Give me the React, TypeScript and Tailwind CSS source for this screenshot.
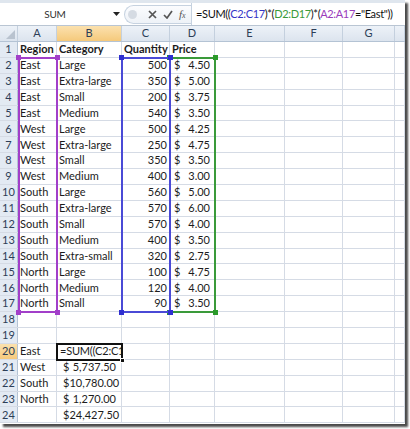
import React from "react";

// column widths of the sheet (row header first, then A..G, then the partial H)
const COLS = [
  { key: "A", w: "w-[39px]" },
  { key: "B", w: "w-[65px]" },
  { key: "C", w: "w-[48px]" },
  { key: "D", w: "w-[45px]" },
  { key: "E", w: "w-[70px]" },
  { key: "F", w: "w-[58px]" },
  { key: "G", w: "w-[52px]" },
  { key: "", w: "w-[10px]" },
];

type Row = { a?: string; b?: string; c?: string; d?: string; bold?: boolean; money?: string };

const ROWS: Row[] = [
  { a: "Region", b: "Category", c: "Quantity", d: "Price", bold: true },
  { a: "East", b: "Large", c: "500", d: "4.50" },
  { a: "East", b: "Extra-large", c: "350", d: "5.00" },
  { a: "East", b: "Small", c: "200", d: "3.75" },
  { a: "East", b: "Medium", c: "540", d: "3.50" },
  { a: "West", b: "Large", c: "500", d: "4.25" },
  { a: "West", b: "Extra-large", c: "250", d: "4.75" },
  { a: "West", b: "Small", c: "350", d: "3.50" },
  { a: "West", b: "Medium", c: "400", d: "3.00" },
  { a: "South", b: "Large", c: "560", d: "5.00" },
  { a: "South", b: "Extra-large", c: "570", d: "6.00" },
  { a: "South", b: "Small", c: "570", d: "4.00" },
  { a: "South", b: "Medium", c: "400", d: "3.50" },
  { a: "South", b: "Extra-small", c: "320", d: "2.75" },
  { a: "North", b: "Large", c: "100", d: "4.75" },
  { a: "North", b: "Medium", c: "120", d: "4.00" },
  { a: "North", b: "Small", c: "90", d: "3.50" },
  {},
  {},
  { a: "East" },
  { a: "West", money: "5,737.50" },
  { a: "South", money: "10,780.00" },
  { a: "North", money: "1,270.00" },
  { money: "24,427.50" },
];

const cell = "h-full shrink-0 border-r border-[#d5dbe5] overflow-hidden whitespace-nowrap flex items-center";

function FormulaBar() {
  return (
    <div className="h-[26px] flex flex-col">
      <div className="h-[3px] bg-[#dfe6ee]" />
      <div className="flex-1 flex items-center border-b border-[#b9c5d3] bg-white overflow-hidden">
        <div className="w-[110px] shrink-0 text-center text-[10px] text-[#333] tracking-tight">SUM</div>
        <div className="w-[12px] shrink-0 flex justify-center">
          <svg width="7" height="4" viewBox="0 0 7 4">
            <path d="M0 0h7L3.5 4z" fill="#222" />
          </svg>
        </div>
        <div className="ml-[2px] h-[19px] w-[67px] shrink-0 flex items-center rounded-l-full border border-r-0 border-[#c6d2e0] bg-gradient-to-b from-[#fbfcfe] to-[#eef2f7]">
          <span className="ml-[3px] w-[9px] h-[9px] rounded-full bg-[#d5dbe3]" />
          <svg className="ml-[11px]" width="9" height="9" viewBox="0 0 9 9">
            <path d="M1 1l7 7M8 1L1 8" stroke="#555" strokeWidth="1.7" />
          </svg>
          <svg className="ml-[6px]" width="10" height="9" viewBox="0 0 10 9">
            <path d="M1 5l3 3 5-7" stroke="#555" strokeWidth="1.7" fill="none" />
          </svg>
          <span className="ml-[6px] text-[11px] italic text-[#555] font-['Liberation_Serif',serif]">
            f<span className="text-[8px]">x</span>
          </span>
        </div>
        <div className="w-px h-full shrink-0 bg-[#c6d2e0]" />
        <div className="pl-[4px] text-[11px] tracking-[-0.35px] text-[#111] whitespace-nowrap">
          =SUM((<span className="text-[#3535c8]">C2:C17</span>)*(
          <span className="text-[#3a9a3a]">D2:D17</span>)*(
          <span className="text-[#9a3cbc]">A2:A17</span>="East"))
        </div>
      </div>
    </div>
  );
}

function HeaderRow() {
  return (
    <div className="h-[16px] flex bg-gradient-to-b from-[#edf2f8] to-[#dce4ee] border-b border-[#b4c3d4]">
      <div className="w-[18px] shrink-0 relative border-r border-[#c4d0de]">
        <svg className="absolute right-[2px] bottom-[2px]" width="9" height="9" viewBox="0 0 9 9">
          <path d="M9 0v9H0z" fill="#b9c3cf" />
        </svg>
      </div>
      {COLS.map((c) => (
        <div
          key={c.key || "h"}
          className={`${c.w} shrink-0 border-r border-[#c4d0de] flex items-center justify-center text-[11px] text-[#2d3e57] ${
            c.key === "B" ? "bg-gradient-to-b from-[#fbe1ae] to-[#f5c97b]" : ""
          }`}
        >
          {c.key}
        </div>
      ))}
    </div>
  );
}

function SheetRow({ n, r }: { n: number; r: Row }) {
  const active = n === 20;
  return (
    <div className="h-[15.9px] flex border-b border-[#d5dbe5] text-[11px] text-[#1c1c1c]">
      <div
        className={`w-[18px] shrink-0 border-r border-[#b4c3d4] flex items-center justify-center text-[11px] text-[#2d3e57] ${
          active ? "bg-gradient-to-b from-[#fbe1ae] to-[#f5c97b]" : "bg-[#e3eaf3]"
        }`}
      >
        {n}
      </div>
      <div className={`${cell} w-[39px] pl-[2px] ${r.bold ? "font-bold" : ""}`}>{r.a}</div>
      <div className={`${cell} w-[65px] px-[2px] ${r.bold ? "font-bold" : ""}`}>
        {active ? (
          <span className="pl-[1px] tracking-[-0.2px]">=SUM((C2:C1</span>
        ) : r.money ? (
          <div className="w-full flex justify-between pl-[4px] pr-[3px]">
            <span>$</span>
            <span>{r.money}</span>
          </div>
        ) : (
          r.b
        )}
      </div>
      <div className={`${cell} w-[48px] px-[2px] ${r.bold ? "font-bold" : "justify-end"}`}>{r.c}</div>
      <div className={`${cell} w-[45px] px-[2px] ${r.bold ? "font-bold" : ""}`}>
        {r.d && !r.bold ? (
          <div className="w-full flex justify-between pl-[2px] pr-[2px]">
            <span>$</span>
            <span>{r.d}</span>
          </div>
        ) : (
          r.d
        )}
      </div>
      <div className={`${cell} w-[70px]`} />
      <div className={`${cell} w-[58px]`} />
      <div className={`${cell} w-[52px]`} />
      <div className={`${cell} w-[10px]`} />
    </div>
  );
}

// coloured range-finder boxes drawn over the referenced cells
function RangeBox({ pos, color }: { pos: string; color: string }) {
  const handle = "absolute w-[5px] h-[5px]";
  return (
    <div className={`absolute pointer-events-none border-2 ${pos} ${color}`}>
      <span className={`${handle} -left-[4px] -top-[4px] bg-current`} />
      <span className={`${handle} -right-[4px] -top-[4px] bg-current`} />
      <span className={`${handle} -left-[4px] -bottom-[4px] bg-current`} />
      <span className={`${handle} -right-[4px] -bottom-[4px] bg-current`} />
    </div>
  );
}

export default function App() {
  return (
    <div className="w-[410px] h-[429px] bg-white font-['Lato',sans-serif]">
      <div className="w-[405px] h-[424px] overflow-hidden bg-white shadow-[3px_3px_2px_#4a4a4a]">
        <FormulaBar />
        <div className="relative">
          <HeaderRow />
          {ROWS.map((r, i) => (
            <SheetRow key={i} n={i + 1} r={r} />
          ))}
          <RangeBox pos="left-[18px] top-[31px] w-[40px] h-[256px]" color="border-[#a23fc9] text-[#a23fc9]" />
          <RangeBox pos="left-[169px] top-[31px] w-[47px] h-[256px]" color="border-[#3a9a3a] text-[#2a9a2a]" />
          <RangeBox pos="left-[121px] top-[31px] w-[50px] h-[256px]" color="border-[#4a4ad6] text-[#2f2fd0]" />
          {/* active cell B20 */}
          <div className="absolute left-[56px] top-[317px] w-[67px] h-[18px] border-2 border-[#111] pointer-events-none">
            <span className="absolute -right-[4px] -bottom-[4px] w-[5px] h-[5px] bg-[#111] border border-white" />
          </div>
        </div>
      </div>
    </div>
  );
}
